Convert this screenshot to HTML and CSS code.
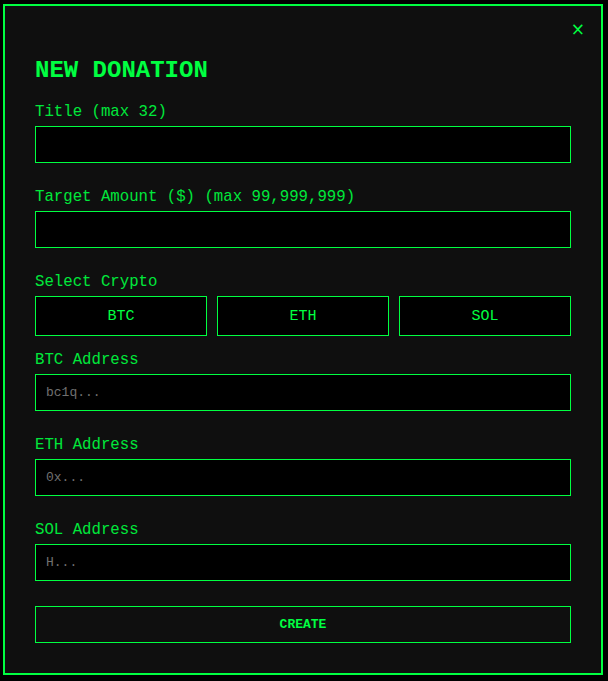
FILE: index.html
```html
<!DOCTYPE html>
<html lang="en">
<head>
  <meta charset="UTF-8" />
  <title>New Donation</title>
  <link rel="stylesheet" href="styles.css">
</head>
<body>
  <div class="modal">
    <button type="button" class="btn-cerrar">&times;</button>
    <h1>NEW DONATION</h1>

    <form id="donacionForm">
      <label for="titulo">Title (max 32)</label>
      <input type="text" id="titulo" maxlength="32" />

      <label for="monto">Target Amount ($) (max 99,999,999)</label>
      <input type="text" id="monto" />

      <label>Select Crypto</label>
      <div class="cryptos">
        <button type="button" class="btn-crypto">BTC</button>
        <button type="button" class="btn-crypto">ETH</button>
        <button type="button" class="btn-crypto">SOL</button>
      </div>

      <label for="btc">BTC Address</label>
      <input type="text" id="btc" placeholder="bc1q..." />

      <label for="eth">ETH Address</label>
      <input type="text" id="eth" placeholder="0x..." />

      <label for="sol">SOL Address</label>
      <input type="text" id="sol" placeholder="H..." />

      <button type="submit" class="btn-crear">CREATE</button>
    </form>
  </div>
</body>
</html>
```

FILE: styles.css
```css
body {
  margin: 0;
  padding: 4px 0 0 3px;
  background-color: #000;
  font-family: "Liberation Mono", "Courier New", monospace;
  color: #00ff41;
}
.modal {
  position: relative;
  width: 600px;
  height: 671px;
  box-sizing: border-box;
  border: 2px solid #00ff41;
  background-color: #0f0f0f;
  padding: 51px 30px 30px 30px;
}
.btn-cerrar {
  position: absolute;
  top: 11px;
  right: 12px;
  background: none;
  border: none;
  color: #00ff41;
  font-family: "DejaVu Sans", sans-serif;
  font-size: 17px;
  line-height: 20px;
  cursor: pointer;
  padding: 2px 4px;
}
h1 {
  margin: 0 0 18px 0;
  font-size: 24px;
  line-height: 28px;
  font-weight: bold;
  color: #00ff41;
}
form {
  display: flex;
  flex-direction: column;
}
label {
  font-size: 15.7px;
  line-height: 18px;
  color: #00e83b;
  margin-bottom: 5px;
}
input[type="text"] {
  height: 37px;
  box-sizing: border-box;
  margin: 0 0 25px 0;
  padding: 0 10px;
  background-color: #000;
  border: 1px solid #00ff41;
  color: #00ff41;
  font-family: inherit;
  font-size: 13px;
  outline: none;
}
input::placeholder {
  color: #707070;
}
.cryptos {
  display: flex;
  gap: 10px;
  margin-bottom: 15px;
}
.btn-crypto {
  flex: 1;
  height: 40px;
  background-color: #000;
  border: 1px solid #00ff41;
  color: #00ff41;
  font-family: inherit;
  font-size: 15px;
  cursor: pointer;
}
.btn-crear {
  height: 37px;
  background: transparent;
  border: 1px solid #00ff41;
  color: #00ff41;
  font-family: inherit;
  font-size: 13px;
  font-weight: bold;
  cursor: pointer;
}
```
